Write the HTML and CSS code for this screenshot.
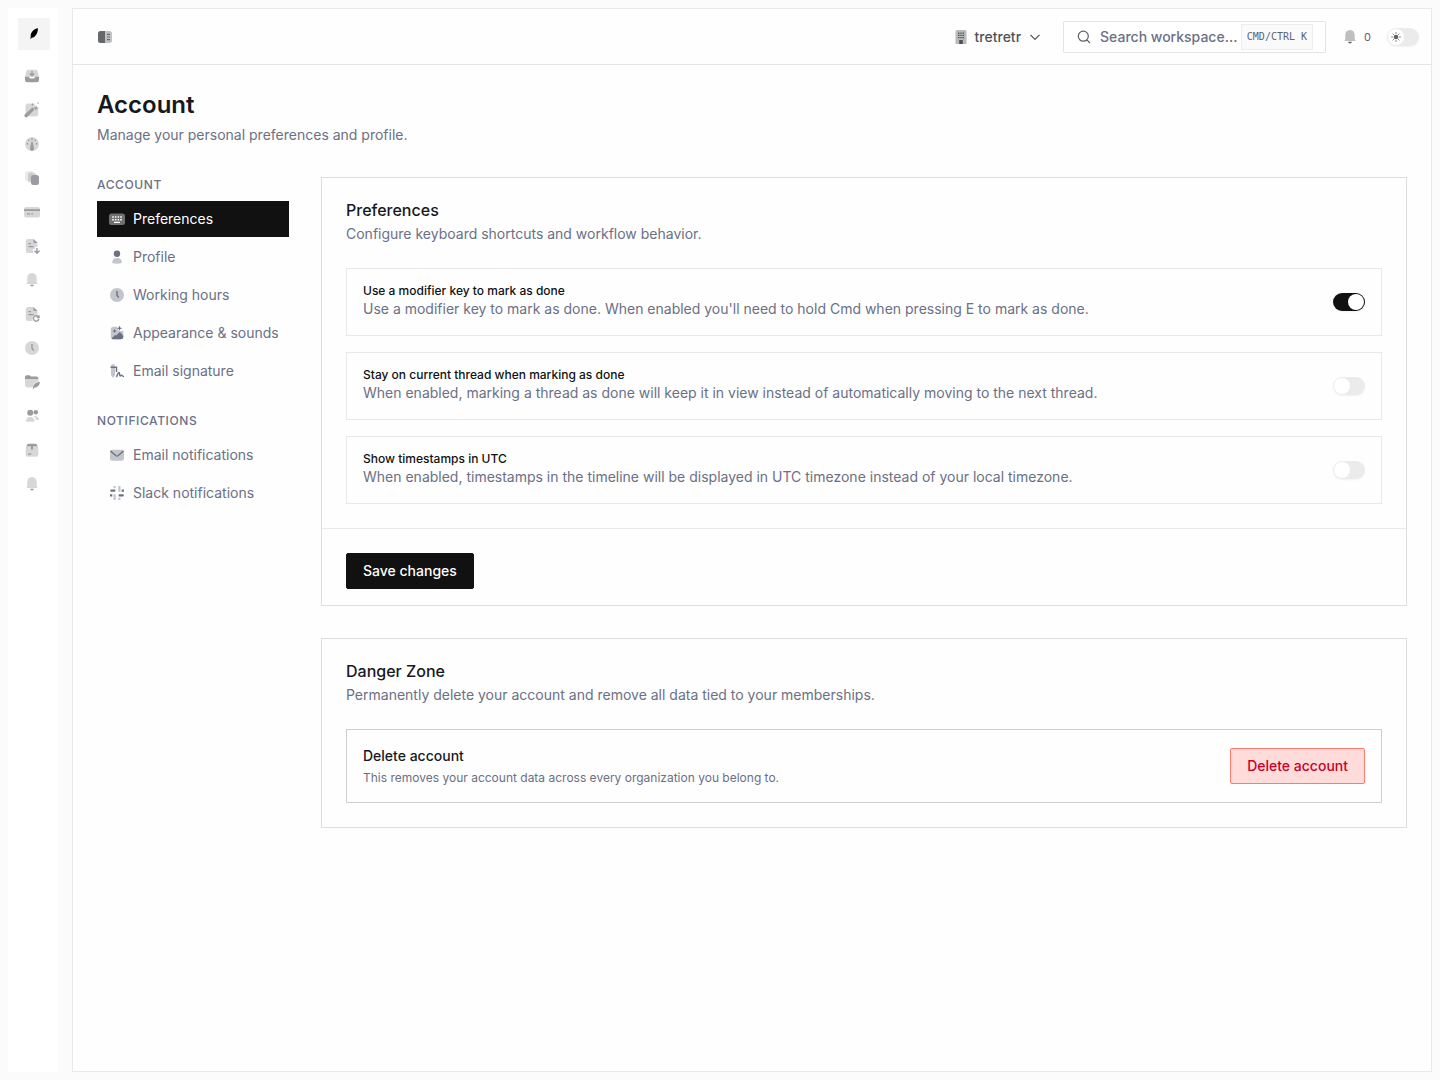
FILE: index.html
```
<!DOCTYPE html>
<html lang="en">
<head>
<meta charset="utf-8">
<meta name="viewport" content="width=device-width, initial-scale=1">
<title>Account</title>
<link rel="stylesheet" href="styles.css">
</head>
<body>

<!-- icon sprite -->
<svg class="sprite" aria-hidden="true">
	<symbol id="i-feather" viewBox="0 0 16 16">
		<path d="M12 2.200C8.200 2.800 4.900 5.600 4.700 9.700L4.500 13.300C5 12.800 5.400 12.300 5.800 11.800C9.300 11.300 11.800 7.500 12 2.200Z"/>
	</symbol>
	<symbol id="i-inbox" viewBox="0 0 16 16">
		<path class="soft" d="M4 1.800H12Q13.300 1.800 13.700 3L15 9H1L2.300 3Q2.700 1.800 4 1.800Z"/>
		<path d="M1 8.800H4.600Q5 8.800 5.300 9.500Q5.700 10.600 6.500 10.600H9.500Q10.300 10.600 10.700 9.500Q11 8.800 11.400 8.800H15V12Q15 14.200 12.800 14.200H3.200Q1 14.200 1 12Z"/>
		<path class="line" d="M8 3V7M5.600 5.400L8 7.600L10.400 5.400"/>
	</symbol>
	<symbol id="i-wand" viewBox="0 0 16 16">
		<path class="soft" d="M4 1.500H10.500L11 5L14.200 6.500V12Q14.200 14.500 11.700 14.500H6L1.500 12V4Q1.500 1.500 4 1.500Z"/>
		<path d="M.700 12.500L7.500 6.200Q8.600 5.400 9.600 6.400Q10.500 7.500 9.600 8.500L3.300 15Q2.200 15.900 1.100 15Q-.100 13.700 .700 12.500Z"/>
		<path d="M12 3L12.700 5.200L15 6L12.700 6.800L12 9L11.300 6.800L9 6L11.300 5.200ZM8.500 1L8.900 2L10 2.500L8.900 3L8.500 4L8.100 3L7 2.500L8.100 2ZM13.500 .500H14.700V1.700H13.500Z"/>
	</symbol>
	<symbol id="i-gauge" viewBox="0 0 16 16">
		<circle class="soft" cx="8" cy="8" r="7"/>
		<path d="M7.500 5.500H8.500L10 12.500Q10.200 14.700 8 14.800Q5.800 14.700 6 12.500ZM7.300 2.300H8.700V4H7.300ZM4.100 3.700H5.500V5.100H4.100ZM10.500 3.700H11.900V5.100H10.500ZM2.700 7H4.100V8.400H2.700ZM11.900 7H13.300V8.400H11.900Z"/>
	</symbol>
	<symbol id="i-cards" viewBox="0 0 16 16">
		<rect class="faint" x="1" y="1" width="8" height="10" rx="2.500"/>
		<rect class="soft" x="4" y="2.500" width="8" height="10" rx="2.500"/>
		<rect x="7" y="5" width="8" height="10" rx="2.500"/>
	</symbol>
	<symbol id="i-card" viewBox="0 0 16 16">
		<rect class="soft" x="0" y="3" width="16" height="10.500" rx="2.500"/>
		<path d="M0 5.200H16V7H0ZM3 9.200H6V10.500H3ZM7.300 9.200H9V10.500H7.300Z"/>
	</symbol>
	<symbol id="i-doc-down" viewBox="0 0 16 16">
		<path class="soft" d="M4 1H9.500L13.500 5V9H11V11H9V15H4Q1.800 15 1.800 12.800V3.200Q1.800 1 4 1Z"/>
		<path d="M9.500 1L13.500 5H9.500ZM4.500 5H7V6.200H4.500ZM4.500 8H9.500V9.200H4.500Z"/>
		<path class="line" d="M13 10V15M10.500 12.700L13 15.200L15.500 12.700"/>
	</symbol>
	<symbol id="i-doc-sync" viewBox="0 0 16 16">
		<path class="soft" d="M4 1H9.500L13.500 5V8.500L10 9.500L8.500 12V15H4Q1.800 15 1.800 12.800V3.200Q1.800 1 4 1Z"/>
		<path d="M9.500 1L13.500 5H9.500ZM4.500 5H7V6.200H4.500ZM4.500 8H9.500V9.200H4.500Z"/>
		<path class="line" d="M14.800 13A2.700 2.700 0 1 1 14.200 10.700M15 9.300V11.600H12.700"/>
	</symbol>
	<symbol id="i-bell" viewBox="0 0 16 16">
		<path class="soft" d="M8 1Q12.500 1.200 12.700 6V9.500Q12.800 10.800 13.700 12H2.300Q3.200 10.800 3.300 9.500V6Q3.500 1.200 8 1Z"/>
		<path d="M6 12.800H10Q9.500 14.500 8 14.600Q6.500 14.500 6 12.800Z"/>
	</symbol>
	<symbol id="i-clock" viewBox="0 0 16 16">
		<circle class="soft" cx="8" cy="8" r="7"/>
		<path class="line" d="M8 4V8.200L9.700 10.500"/>
	</symbol>
	<symbol id="i-folder" viewBox="0 0 16 16">
		<path class="soft" d="M1 5H14.500V7.500Q9.500 8 8.500 13.500H3.500Q1 13.500 1 11.500Z"/>
		<path d="M1 5V3Q1 1.300 2.700 1.300H5.500L7 2.500H12.500Q14.500 2.500 14.500 5ZM16 8C11.500 8 9 10 8.800 15.500L10.500 13.500C14 13.500 15.500 11 16 8Z"/>
	</symbol>
	<symbol id="i-users" viewBox="0 0 16 16">
		<circle cx="6.200" cy="4.800" r="3"/>
		<circle cx="11.800" cy="4.300" r="2.300"/>
		<path class="soft" d="M2 13.700Q1.800 9 6.200 9Q10.500 9 10.500 13.700ZM9.500 8Q14.500 7.200 15 12H12Q11.800 9.500 9.500 8Z"/>
	</symbol>
	<symbol id="i-box" viewBox="0 0 16 16">
		<path class="soft" d="M1.700 5H14.300V12.300Q14.300 14.800 11.800 14.800H4.200Q1.700 14.800 1.700 12.300Z"/>
		<path d="M2 4.500L3.500 2.200Q3.900 1.700 4.600 1.700H11.400Q12.100 1.700 12.500 2.200L14 4.500H9V7.500H7V4.500ZM4 11.500H7.300V12.700H4Z"/>
	</symbol>
	<symbol id="i-panel" viewBox="0 0 16 16">
		<path d="M8 2V14H3.500Q1 14 1 11.500V4.500Q1 2 3.500 2Z"/>
		<path class="soft" d="M8 2H12.500Q15 2 15 4.500V11.500Q15 14 12.500 14H8Z"/>
		<path d="M10 4.800H13V6H10ZM10 7.400H13V8.600H10ZM10 10H13V11.200H10Z"/>
	</symbol>
	<symbol id="i-building" viewBox="0 0 16 16">
		<path class="soft" d="M4.200 1H11.800Q13.500 1 13.500 2.700V15H2.500V2.700Q2.500 1 4.200 1Z"/>
		<path d="M5 3.500H6.500V4.700H5ZM7.300 3.500H8.700V4.700H7.300ZM9.500 3.500H11V4.700H9.500ZM5 5.800H6.500V7H5ZM7.300 5.800H8.700V7H7.300ZM9.500 5.800H11V7H9.500ZM5 8.100H6.500V9.300H5ZM7.300 8.100H8.700V9.300H7.300ZM9.500 8.100H11V9.300H9.500ZM6.200 11H9.800V15H6.200Z"/>
	</symbol>
	<symbol id="i-chevron" viewBox="0 0 16 16">
		<path class="thin" d="M3.500 5.800L8 10.300L12.500 5.800"/>
	</symbol>
	<symbol id="i-search" viewBox="0 0 16 16">
		<path class="thin" d="M12.300 7.200A5 5 0 1 1 2.300 7.200A5 5 0 1 1 12.300 7.200M10.900 10.900L14 14"/>
	</symbol>
	<symbol id="i-sun" viewBox="0 0 16 16">
		<circle cx="8" cy="8" r="3.700"/>
		<path class="rays" d="M8 .500V2.800M8 13.200V15.500M.500 8H2.800M13.200 8H15.500M2.700 2.700L4.300 4.300M11.700 11.700L13.300 13.300M2.700 13.300L4.300 11.700M11.700 4.300L13.300 2.700"/>
	</symbol>
	<symbol id="i-keyboard" viewBox="0 0 16 16">
		<rect class="soft" x="0" y="2.500" width="16" height="11.500" rx="2.500"/>
		<path d="M3.200 5.200H4.800V6.700H3.200ZM5.900 5.200H7.400V6.700H5.900ZM8.600 5.200H10.100V6.700H8.600ZM11.200 5.200H12.800V6.700H11.200ZM3.200 7.900H4.800V9.400H3.200ZM5.900 7.900H7.400V9.400H5.900ZM8.600 7.900H10.100V9.400H8.600ZM11.200 7.900H12.800V9.400H11.200ZM5 10.700H11V12H5Z"/>
	</symbol>
	<symbol id="i-user" viewBox="0 0 16 16">
		<circle cx="8" cy="4.700" r="3.200"/>
		<path class="soft" d="M3.200 14Q3 9 8 9Q13 9 12.800 14Q10.500 14.700 8 14.700Q5.500 14.700 3.200 14Z"/>
	</symbol>
	<symbol id="i-image" viewBox="0 0 16 16">
		<path class="soft" d="M4.500 1.700H8L9 5L11 6.500L14.300 5.500V12Q14.300 14.300 12 14.300H4Q1.800 14.300 1.800 12V4.200Q1.800 1.700 4.500 1.700Z"/>
		<path d="M2.500 13.500L6 10L7.500 10.500L10 7.500Q11 7 12 8L14.300 11V12.300Q14 14.300 12 14.300H4Q3 14.300 2.500 13.500ZM10.500 .500L11.200 2.500L13.300 3.200L11.200 3.900L10.500 6L9.800 3.900L7.700 3.200L9.800 2.500ZM5.500 4L6.100 5.300L7.500 6L6.100 6.700L5.500 8L4.900 6.700L3.500 6L4.900 5.300Z"/>
	</symbol>
	<symbol id="i-sign" viewBox="0 0 16 16">
		<path class="soft" d="M2 3Q2 1 4 1Q6 1 6 3V12L4 15L2 12Z"/>
		<path class="line" d="M1.500 4.300H7.500V9M7 13.500C8 14.500 8.500 9.500 10 9.500C11.200 9.500 10 13 11.200 13C12 13 12 12 12.700 12.200C13.200 12.500 13.500 13.600 15 13.500"/>
	</symbol>
	<symbol id="i-mail" viewBox="0 0 16 16">
		<rect class="soft" x="1" y="2.700" width="14" height="11" rx="2"/>
		<path class="line" d="M1.500 4L7 8.800Q8 9.500 9 8.800L14.500 4"/>
	</symbol>
	<symbol id="i-slack" viewBox="0 0 16 16">
		<path d="M2.200 4.500H5.500Q6.500 4.500 6.500 5.600Q6.500 6.700 5.500 6.700H2.200Q1.200 6.700 1.200 5.600Q1.200 4.500 2.200 4.500ZM10.500 9.300H13.800Q14.800 9.300 14.800 10.400Q14.800 11.500 13.800 11.500H10.500Q9.500 11.500 9.500 10.400Q9.500 9.300 10.500 9.300ZM12.700 4.500H15V6.700H12.700ZM1 9.300H3.300V11.500H1Z"/>
		<path class="soft" d="M9.300 1H11.500V6.700H9.300ZM4.500 9.300H6.700V15H4.500ZM4.500 1H6.700V3.300H4.500ZM9.300 12.700H11.500V15H9.300Z"/>
	</symbol>
</svg>

<div class="app">
	<nav class="rail" aria-label="Workspace">
		<a class="logo" href="#" aria-label="Home"><svg class="icon"><use href="#i-feather"/></svg></a>
		<div class="rail-links">
			<a href="#" aria-label="Inbox"><svg class="icon"><use href="#i-inbox"/></svg></a>
			<a href="#" aria-label="Automations"><svg class="icon"><use href="#i-wand"/></svg></a>
			<a href="#" aria-label="Dashboard"><svg class="icon"><use href="#i-gauge"/></svg></a>
			<a href="#" aria-label="Templates"><svg class="icon"><use href="#i-cards"/></svg></a>
			<a href="#" aria-label="Billing"><svg class="icon"><use href="#i-card"/></svg></a>
			<a href="#" aria-label="Downloads"><svg class="icon"><use href="#i-doc-down"/></svg></a>
			<a href="#" aria-label="Alerts"><svg class="icon"><use href="#i-bell"/></svg></a>
			<a href="#" aria-label="Sync"><svg class="icon"><use href="#i-doc-sync"/></svg></a>
			<a href="#" aria-label="History"><svg class="icon"><use href="#i-clock"/></svg></a>
			<a href="#" aria-label="Files"><svg class="icon"><use href="#i-folder"/></svg></a>
			<a href="#" aria-label="People"><svg class="icon"><use href="#i-users"/></svg></a>
			<a href="#" aria-label="Archive"><svg class="icon"><use href="#i-box"/></svg></a>
			<a href="#" aria-label="Notifications"><svg class="icon"><use href="#i-bell"/></svg></a>
		</div>
	</nav>

	<div class="panel">
		<header class="topbar">
			<button class="icon-button" type="button" aria-label="Toggle sidebar"><svg class="icon"><use href="#i-panel"/></svg></button>
			<div class="topbar-right">
				<button class="org" type="button">
					<svg class="icon"><use href="#i-building"/></svg>
					<span>tretretr</span>
					<svg class="icon"><use href="#i-chevron"/></svg>
				</button>
				<label class="search">
					<svg class="icon"><use href="#i-search"/></svg>
					<input type="text" placeholder="Search workspace..." aria-label="Search workspace">
					<kbd>CMD/CTRL K</kbd>
				</label>
				<button class="alerts" type="button" aria-label="Notifications, 0 unread">
					<svg class="icon"><use href="#i-bell"/></svg>
					<span>0</span>
				</button>
				<label class="theme">
					<input class="switch" type="checkbox" aria-label="Dark mode">
					<svg class="theme-icon"><use href="#i-sun"/></svg>
				</label>
			</div>
		</header>

		<main class="content">
			<h1>Account</h1>
			<p class="lead">Manage your personal preferences and profile.</p>

			<div class="columns">
				<nav class="side" aria-label="Settings">
					<h2>Account</h2>
					<ul>
						<li><a class="active" href="#"><svg class="icon"><use href="#i-keyboard"/></svg>Preferences</a></li>
						<li><a href="#"><svg class="icon"><use href="#i-user"/></svg>Profile</a></li>
						<li><a href="#"><svg class="icon"><use href="#i-clock"/></svg>Working hours</a></li>
						<li><a href="#"><svg class="icon"><use href="#i-image"/></svg>Appearance &amp; sounds</a></li>
						<li><a href="#"><svg class="icon"><use href="#i-sign"/></svg>Email signature</a></li>
					</ul>
					<h2>Notifications</h2>
					<ul>
						<li><a href="#"><svg class="icon"><use href="#i-mail"/></svg>Email notifications</a></li>
						<li><a href="#"><svg class="icon"><use href="#i-slack"/></svg>Slack notifications</a></li>
					</ul>
				</nav>

				<div class="cards">
					<form class="card">
						<div class="card-body">
							<h3>Preferences</h3>
							<p class="desc">Configure keyboard shortcuts and workflow behavior.</p>
							<div class="options">
								<div class="option">
									<div class="option-text">
										<label for="modifier">Use a modifier key to mark as done</label>
										<p>Use a modifier key to mark as done. When enabled you'll need to hold Cmd when pressing E to mark as done.</p>
									</div>
									<input class="switch" id="modifier" type="checkbox" checked>
								</div>
								<div class="option">
									<div class="option-text">
										<label for="stay">Stay on current thread when marking as done</label>
										<p>When enabled, marking a thread as done will keep it in view instead of automatically moving to the next thread.</p>
									</div>
									<input class="switch" id="stay" type="checkbox">
								</div>
								<div class="option">
									<div class="option-text">
										<label for="utc">Show timestamps in UTC</label>
										<p>When enabled, timestamps in the timeline will be displayed in UTC timezone instead of your local timezone.</p>
									</div>
									<input class="switch" id="utc" type="checkbox">
								</div>
							</div>
						</div>
						<div class="card-footer">
							<button class="button" type="button">Save changes</button>
						</div>
					</form>

					<section class="card">
						<div class="card-body">
							<h3>Danger Zone</h3>
							<p class="desc">Permanently delete your account and remove all data tied to your memberships.</p>
							<div class="danger">
								<div>
									<h4>Delete account</h4>
									<p>This removes your account data across every organization you belong to.</p>
								</div>
								<button class="button delete" type="button">Delete account</button>
							</div>
						</div>
					</section>
				</div>
			</div>
		</main>
	</div>
</div>

</body>
</html>
```
FILE: styles.css
```
* {
	box-sizing: border-box;
}
body {
	margin: 0;
	background-color: #fbfbfb;
	color: #161922;
	font-family: Inter, "Liberation Sans", sans-serif;
	font-size: 14px;
	line-height: 20px;
}
h1, h2, h3, h4, p, ul {
	margin: 0;
	padding: 0;
}
ul {
	list-style: none;
}
a {
	color: inherit;
	text-decoration: none;
}
button, input {
	margin: 0;
	padding: 0;
	border: none;
	background: none;
	color: inherit;
	font: inherit;
}
button {
	cursor: pointer;
}

/* icons */
.sprite {
	position: absolute;
	width: 0;
	height: 0;
}
.icon {
	display: block;
	flex: none;
	width: 16px;
	height: 16px;
	fill: currentColor;
}
.soft {
	opacity: 0.4;
}
.faint {
	opacity: 0.2;
}
.line, .thin, .rays {
	fill: none;
	stroke: currentColor;
	stroke-width: 1.4;
}
.thin {
	stroke-width: 1.2;
}
.rays {
	stroke-width: 1.6;
}

/* frame */
.app {
	display: flex;
	gap: 14px;
	min-height: 100vh;
	padding: 8px;
}
.rail {
	display: flex;
	flex-direction: column;
	gap: 10px;
	width: 50px;
	padding: 10px 8px 10px 10px;
	background-color: #fff;
	color: #9b9ca1;
}
.rail a {
	display: grid;
	place-items: center;
	width: 28px;
	height: 32px;
}
.rail .logo {
	width: 32px;
	background-color: #f4f4f4;
	color: #000;
}
.rail-links {
	display: grid;
	gap: 2px;
}
.panel {
	flex: 1;
	min-width: 0;
	border: 1px solid #e8e8e8;
	background-color: #fefefe;
}

/* top bar */
.topbar {
	display: flex;
	align-items: center;
	justify-content: space-between;
	height: 56px;
	padding: 0 12px 0 24px;
	border-bottom: 1px solid #e5e5e5;
	color: #5f6164;
}
.icon-button {
	color: #66686b;
}
.topbar-right {
	display: flex;
	align-items: center;
}
.org {
	display: flex;
	align-items: center;
	gap: 6px;
	margin-right: 20px;
	color: #4f5257;
	font-weight: 500;
}
.search {
	display: flex;
	align-items: center;
	width: 263px;
	height: 32px;
	padding: 0 12px;
	border: 1px solid #e5e5e5;
	border-radius: 1px;
	background-color: #fff;
}
.search input {
	flex: 1;
	min-width: 0;
	margin-left: 8px;
	outline: none;
	font-weight: 500;
}
.search input::placeholder {
	color: #6b7085;
	opacity: 1;
}
.search kbd {
	padding: 2px 5px;
	border: 1px solid #ededed;
	background-color: #fafafa;
	color: #5d6274;
	font-family: "DejaVu Sans Mono", monospace;
	font-size: 10px;
}
.alerts {
	display: flex;
	align-items: center;
	gap: 6px;
	margin: 0 16px;
	font-size: 11px;
}
.theme {
	display: flex;
	position: relative;
}
.theme-icon {
	position: absolute;
	top: 4px;
	left: 4px;
	width: 10px;
	height: 10px;
	fill: currentColor;
	pointer-events: none;
}

/* switch */
.switch {
	appearance: none;
	flex: none;
	width: 32px;
	height: 18px;
	padding: 1px;
	border-radius: 9px;
	background-color: #ebebeb;
	box-shadow: 0 1px 2px rgba(0, 0, 0, 0.05);
	cursor: pointer;
}
.switch::before {
	content: "";
	display: block;
	width: 16px;
	height: 16px;
	border-radius: 50%;
	background-color: #fff;
}
.switch:checked {
	background-color: #111;
}
.switch:checked::before {
	margin-left: auto;
}

/* page */
.content {
	padding: 24px;
}
h1 {
	font-size: 24px;
	font-weight: 600;
	line-height: 32px;
}
.lead {
	margin-top: 4px;
	color: #6b7085;
}
.columns {
	display: grid;
	grid-template-columns: 192px minmax(0, 1fr);
	align-items: start;
	gap: 32px;
	margin-top: 32px;
}
.side {
	color: #6b7085;
}
.side h2 {
	margin-bottom: 8px;
	font-size: 12px;
	font-weight: 500;
	line-height: 16px;
	letter-spacing: 0.05em;
	text-transform: uppercase;
}
.side ul {
	display: flex;
	flex-direction: column;
	gap: 2px;
}
.side ul + h2 {
	margin-top: 24px;
}
.side a {
	display: flex;
	align-items: center;
	gap: 8px;
	height: 36px;
	padding: 0 12px;
	white-space: nowrap;
}
.side a.active {
	background-color: #111;
	color: #fff;
}

/* cards */
.cards {
	display: grid;
	gap: 32px;
}
.card {
	border: 1px solid #dedede;
}
.card-body {
	padding: 24px;
}
.card h3 {
	font-size: 16px;
	font-weight: 500;
	line-height: 16px;
}
.desc {
	margin: 6px 0 24px;
	color: #6b7085;
}
.options {
	display: grid;
	gap: 16px;
}
.option, .danger {
	display: flex;
	align-items: center;
	justify-content: space-between;
	gap: 16px;
	padding: 16px;
	border: 1px solid #e9e9e9;
}
.option-text {
	display: grid;
	gap: 2px;
	color: #6b7085;
}
.option label {
	color: #111;
	font-size: 12px;
	font-weight: 500;
	line-height: 12px;
}
.card-footer {
	padding: 24px 24px 16px;
	border-top: 1px solid #e9e9e9;
}
.button {
	height: 36px;
	padding: 0 16px;
	border: 1px solid #111;
	border-radius: 2px;
	background-color: #111;
	color: #fff;
	font-weight: 500;
}
.danger {
	border-color: #cfcfcf;
}
.danger h4 {
	font-size: 14px;
	font-weight: 500;
}
.danger p {
	margin-top: 4px;
	color: #6b7085;
	font-size: 12px;
	line-height: 16px;
}
.delete {
	border-color: #ff7b72;
	background-color: #ffdcd9;
	color: #c9002b;
}
```
